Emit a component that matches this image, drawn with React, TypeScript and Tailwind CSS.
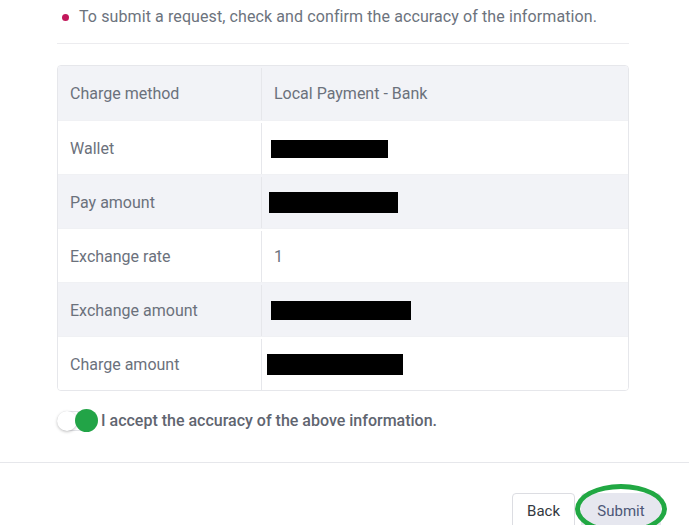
import React from 'react';

type Row = { label: string; value?: string; redact?: string };

const rows: Row[] = [
  { label: 'Charge method', value: 'Local Payment - Bank' },
  { label: 'Wallet', redact: 'ml-[9px] w-[117px] h-[18px]' },
  { label: 'Pay amount', redact: 'ml-[7px] w-[129px] h-[21px]' },
  { label: 'Exchange rate', value: '1' },
  { label: 'Exchange amount', redact: 'ml-[9px] w-[140px] h-[19px]' },
  { label: 'Charge amount', redact: 'ml-[5px] w-[136px] h-[21px]' },
];

export default function App(): JSX.Element {
  return (
    <div className="w-[689px] h-[525px] overflow-hidden bg-white font-['Roboto',sans-serif]">
      <div className="pl-[57px] pr-[60px]">
        <div className="flex items-center h-[44px] pb-[9px] border-b border-[#ececef]">
          <span className="w-[7px] h-[7px] rounded-full bg-[#c2185b] ml-[5px] mr-[10px]" />
          <span className="text-[16px] tracking-[0.1px] text-[#6c737d]">
            To submit a request, check and confirm the accuracy of the information.
          </span>
        </div>

        <div className="mt-[21px] border border-[#e6e7eb] rounded-[4px] overflow-hidden">
          {rows.map((row, i) => (
            <div
              key={row.label}
              className={
                'flex h-[54px] pt-[2px] text-[16px] text-[#6b717c] ' +
                (i % 2 === 0 ? 'bg-[#f2f3f7]' : 'bg-white') +
                (i > 0 ? ' border-t border-[#f0f1f4]' : '')
              }>
              <div className="w-[204px] flex items-center pl-[12px] border-r border-[#e6e7eb]">
                {row.label}
              </div>
              <div className="flex-1 flex items-center">
                {row.value ? (
                  <span className="pl-[12px]">{row.value}</span>
                ) : (
                  <span className={'block bg-black ' + row.redact} />
                )}
              </div>
            </div>
          ))}
        </div>

        <div className="flex items-center mt-[19px] h-[22px]">
          <div className="relative w-[42px] h-[22px] shrink-0">
            <span className="absolute left-0 top-[1px] w-[40px] h-[20px] rounded-full bg-white border border-[#e3e4e8]" />
            <span className="absolute left-0 top-[1px] w-[20px] h-[20px] rounded-full bg-white shadow-[0_1px_3px_rgba(0,0,0,0.25)]" />
            <span className="absolute left-[18px] top-[-1px] w-[23px] h-[23px] rounded-full bg-[#22a447]" />
          </div>
          <span className="ml-[2px] text-[16px] font-medium text-[#5f6570]">
            I accept the accuracy of the above information.
          </span>
        </div>
      </div>

      <div className="mt-[30px] border-t border-[#e6e7eb] flex justify-end pr-[28px] pt-[30px]">
        <button className="h-[36px] px-[14px] rounded-[4px] border border-[#dcdde2] bg-white text-[15px] text-[#333840]">
          Back
        </button>
        <div className="relative ml-[6px]">
          <button className="h-[36px] w-[80px] rounded-[4px] bg-[#e6e7ef] text-[15px] text-[#4d5877]">
            Submit
          </button>
          <span className="absolute left-[-6px] top-[-9px] w-[92px] h-[50px] rounded-[50%] border-[5px] border-[#21a843]" />
        </div>
      </div>
    </div>
  );
}
